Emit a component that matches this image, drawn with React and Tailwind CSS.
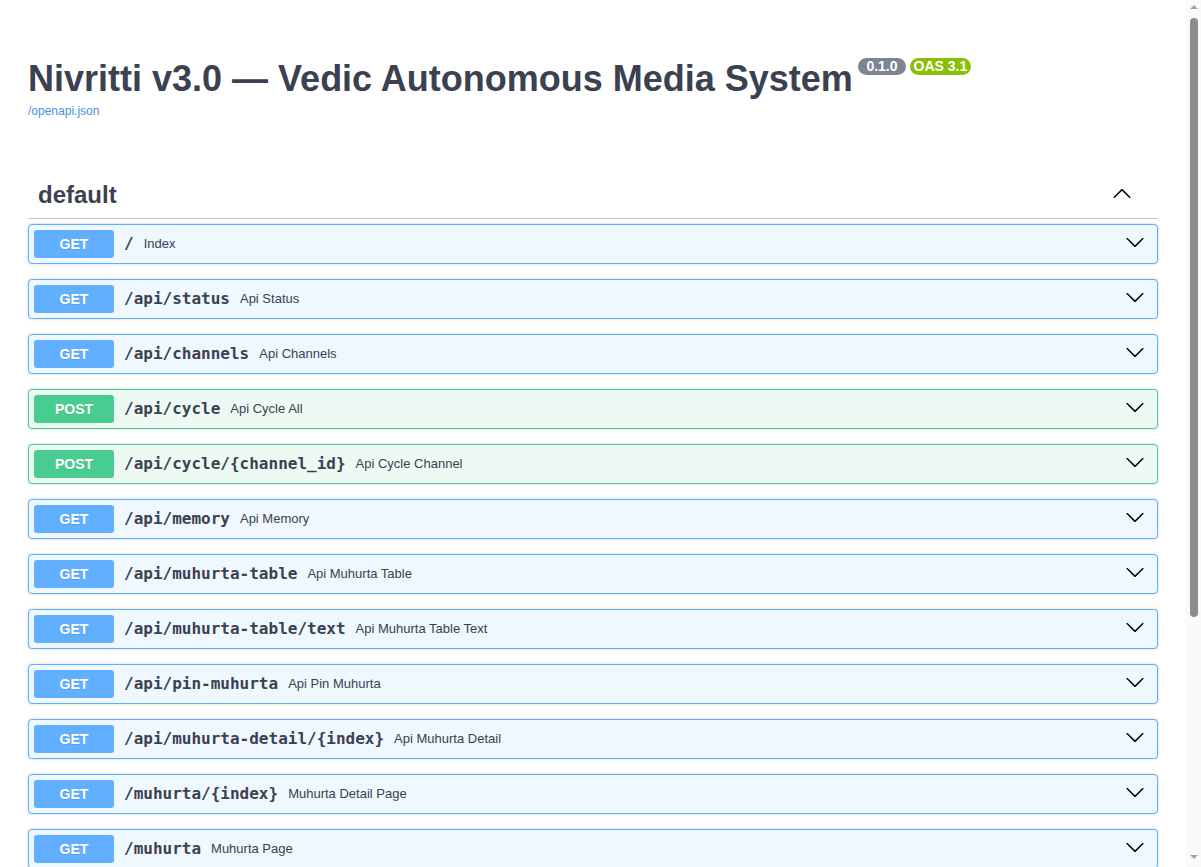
import React from "react";

const ops = [
  { m: "GET", p: "/", d: "Index" },
  { m: "GET", p: "/api/status", d: "Api Status" },
  { m: "GET", p: "/api/channels", d: "Api Channels" },
  { m: "POST", p: "/api/cycle", d: "Api Cycle All" },
  { m: "POST", p: "/api/cycle/{channel_id}", d: "Api Cycle Channel" },
  { m: "GET", p: "/api/memory", d: "Api Memory" },
  { m: "GET", p: "/api/muhurta-table", d: "Api Muhurta Table" },
  { m: "GET", p: "/api/muhurta-table/text", d: "Api Muhurta Table Text" },
  { m: "GET", p: "/api/pin-muhurta", d: "Api Pin Muhurta" },
  { m: "GET", p: "/api/muhurta-detail/{index}", d: "Api Muhurta Detail" },
  { m: "GET", p: "/muhurta/{index}", d: "Muhurta Detail Page" },
  { m: "GET", p: "/muhurta", d: "Muhurta Page" },
];

function Arrow({ className }) {
  return (
    <svg className={className} width="20" height="20" viewBox="0 0 20 20" fill="currentColor" aria-hidden="true">
      <path d="M17.418 6.109c.272-.268.709-.268.979 0s.271.701 0 .969l-7.908 7.83c-.27.268-.707.268-.979 0l-7.908-7.83c-.27-.268-.27-.701 0-.969.271-.268.709-.268.979 0L10 13.25l7.418-7.141z" />
    </svg>
  );
}

function Op({ m, p, d }) {
  const post = m === "POST";
  return (
    <div
      className={
        "mb-[15px] rounded-[4px] border shadow-[0_0_3px_rgba(0,0,0,0.19)] " +
        (post ? "border-[#49cc90] bg-[#edfaf4]" : "border-[#61affe] bg-[#eff7ff]")
      }
    >
      <div className="flex items-center p-[5px]">
        <span
          className={
            "w-[80px] h-[28px] leading-[28px] rounded-[3px] text-center text-[14px] font-bold text-white [text-shadow:0_1px_0_rgba(0,0,0,0.1)] " +
            (post ? "bg-[#49cc90]" : "bg-[#61affe]")
          }
          style={{ fontFamily: '"Liberation Sans", Arial, sans-serif' }}
        >
          {m}
        </span>
        <span
          className="px-[10px] text-[16px] font-bold text-[#3b4151] leading-[28px]"
          style={{ fontFamily: '"DejaVu Sans Mono", monospace' }}
        >
          {p}
        </span>
        <span className="text-[13px] text-[#3b4151]">{d}</span>
        <Arrow className="ml-auto mr-[7px] mb-[4px] text-black" />
      </div>
    </div>
  );
}

function Scrollbar() {
  return (
    <div className="w-[15px] shrink-0 h-screen bg-[#fafafa] flex flex-col items-center">
      <div className="mt-[5px] w-0 h-0 border-l-[4px] border-r-[4px] border-b-[4px] border-l-transparent border-r-transparent border-b-[#a3a3a3]" />
      <div className="mt-[9px] w-[8px] h-[599px] rounded-full bg-[#8c8c8c]" />
      <div className="flex-1" />
      <div className="mb-[8px] w-0 h-0 border-l-[4px] border-r-[4px] border-t-[4px] border-l-transparent border-r-transparent border-t-[#a3a3a3]" />
    </div>
  );
}

export default function App() {
  return (
    <div
      className="flex h-screen overflow-hidden bg-white text-[#3b4151]"
      style={{ fontFamily: '"Liberation Sans", Arial, sans-serif' }}
    >
      <div className="flex-1 min-w-0 overflow-hidden">
        <div className="px-[28px] pt-[58px] pb-[40px]">
          <div className="mb-[53px]">
            <div className="flex items-start">
              <h2 className="text-[36px] font-bold leading-[41px] text-[#3b4151]">
                Nivritti v3.0 — Vedic Autonomous Media System
              </h2>
              <span className="ml-[5px] h-[17px] leading-[17px] px-[8.5px] rounded-[57px] bg-[#7d8492] text-white text-[14px] font-bold">
                0.1.0
              </span>
              <span className="ml-[4px] h-[17px] leading-[17px] px-[3.5px] rounded-[57px] bg-[#89bf04] text-white text-[14px] font-bold">
                OAS 3.1
              </span>
            </div>
            <a className="block mt-[5px] text-[12px] leading-[14px] text-[#4990e2]" href="#">
              /openapi.json
            </a>
          </div>

          <div>
            <div className="flex items-center mb-[5px] pl-[10px] pr-[26px] py-[10px] border-b border-[#c4c6cb]">
              <h3 className="text-[24px] font-bold leading-[27px] text-[#3b4151]">default</h3>
              <Arrow className="ml-auto rotate-180 mb-[2px] text-black" />
            </div>
            {ops.map((o) => (
              <Op key={o.m + o.p} {...o} />
            ))}
          </div>

          <section className="mt-[30px] rounded-[4px] border border-[#c4c6cb]">
            <div className="flex items-center px-[10px] py-[10px]">
              <h4 className="text-[16px] font-bold text-[#3b4151]">Schemas</h4>
              <Arrow className="ml-auto mr-[10px] rotate-180 text-black" />
            </div>
            <div className="px-[20px] pb-[15px]">
              {["HTTPValidationError", "ValidationError"].map((n) => (
                <div key={n} className="mb-[15px] rounded-[4px] bg-[#f2f2f2] p-[10px] text-[16px] font-bold text-[#3b4151]">
                  {n}
                </div>
              ))}
            </div>
          </section>
        </div>
      </div>
      <Scrollbar />
    </div>
  );
}
